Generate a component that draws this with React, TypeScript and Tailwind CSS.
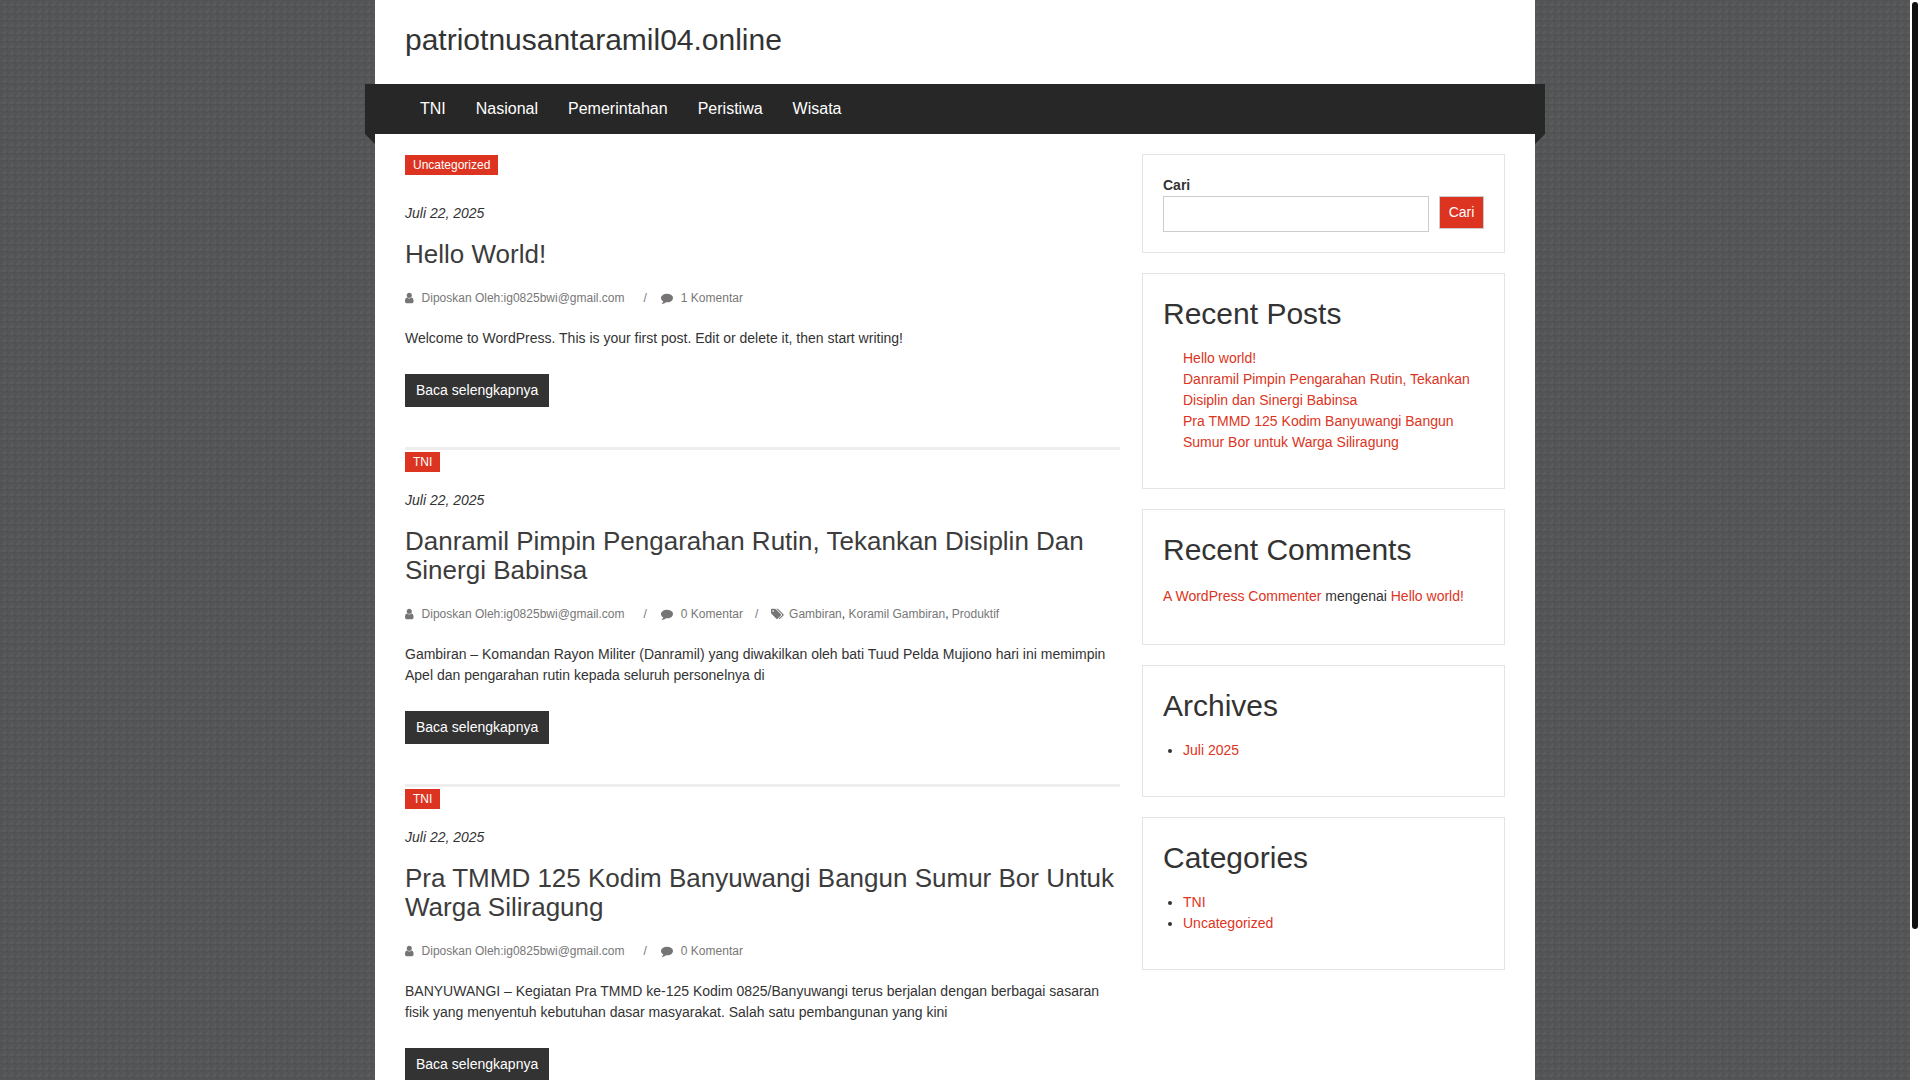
import type { ReactNode } from "react";

type Post = {
  category: string;
  title: string;
  comments: string;
  tags?: string[];
  excerpt: string;
};

const posts: Post[] = [
  {
    category: "Uncategorized",
    title: "Hello World!",
    comments: "1 Komentar",
    excerpt:
      "Welcome to WordPress. This is your first post. Edit or delete it, then start writing!",
  },
  {
    category: "TNI",
    title: "Danramil Pimpin Pengarahan Rutin, Tekankan Disiplin Dan Sinergi Babinsa",
    comments: "0 Komentar",
    tags: ["Gambiran", "Koramil Gambiran", "Produktif"],
    excerpt:
      "Gambiran – Komandan Rayon Militer (Danramil) yang diwakilkan oleh bati Tuud Pelda Mujiono hari ini memimpin Apel dan pengarahan rutin kepada seluruh personelnya di",
  },
  {
    category: "TNI",
    title: "Pra TMMD 125 Kodim Banyuwangi Bangun Sumur Bor Untuk Warga Siliragung",
    comments: "0 Komentar",
    excerpt:
      "BANYUWANGI – Kegiatan Pra TMMD ke-125 Kodim 0825/Banyuwangi terus berjalan dengan berbagai sasaran fisik yang menyentuh kebutuhan dasar masyarakat. Salah satu pembangunan yang kini",
  },
];

const USER =
  "M1280 1399q0 109-62.5 187t-150.5 78h-854q-88 0-150.5-78t-62.5-187q0-85 8.5-160.5t31.5-152 58.5-131 94-89 134.5-34.5q131 128 313 128t313-128q76 0 134.5 34.5t94 89 58.5 131 31.5 152 8.5 160.5zm-256-887q0 159-112.5 271.5t-271.5 112.5-271.5-112.5-112.5-271.5 112.5-271.5 271.5-112.5 271.5 112.5 112.5 271.5z";
const COMMENT =
  "M1792 896q0 174-120 321.5t-326 233-450 85.5q-70 0-145-8-198 175-460 242-49 14-114 22-17 2-30.5-9t-17.5-29v-1q-3-4-.5-12t2-10 4.5-9.5l6-9 7-8.5 8-9q7-8 31-34.5t34.5-38 31-39.5 32.5-51 27-59 26-76q-157-89-247.5-220t-90.5-281q0-130 71-248.5t191-204.5 286-136.5 348-50.5q244 0 450 85.5t326 233 120 321.5z";
const TAGS =
  "M448 448q0-53-37.5-90.5t-90.5-37.5-90.5 37.5-37.5 90.5 37.5 90.5 90.5 37.5 90.5-37.5 37.5-90.5zm1067 576q0 53-37 90l-491 492q-39 37-91 37-53 0-90-37l-715-716q-38-37-64.5-101t-26.5-117v-416q0-52 38-90t90-38h416q53 0 117 26.5t102 64.5l715 714q37 39 37 91zm384 0q0 53-37 90l-491 492q-39 37-91 37-36 0-59-14t-53-45l470-470q37-37 37-90 0-52-37-91l-715-714q-38-38-102-64.5t-117-26.5h224q53 0 117 26.5t102 64.5l715 714q37 39 37 91z";

function Icon({ d, width }: { d: string; width: number }) {
  return (
    <svg
      viewBox={`0 0 ${width} 1792`}
      className="mb-0.5 h-3 w-auto shrink-0 fill-[#777474]"
      aria-hidden="true"
    >
      <path d={d} />
    </svg>
  );
}

function PostCard({ post, first }: { post: Post; first: boolean }) {
  return (
    <article className={first ? "pt-px" : "border-t-[3px] border-[#eeeeee] pt-0.5"}>
      <div className={first ? "mb-7 flex" : "mb-[18px] flex"}>
        <a href="#" className="bg-[#dd3422] px-2 text-xs leading-5 text-white">
          {post.category}
        </a>
      </div>
      <p className="italic">Juli 22, 2025</p>
      <h2 className="mt-4 text-[26px] leading-[29px] text-[#3c3c3c]">
        <a href="#">{post.title}</a>
      </h2>
      <div className="mt-[19px] flex items-center text-xs leading-[21px] text-[#777777]">
        <Icon d={USER} width={1280} />
        <a href="#" className="ml-2">
          Diposkan Oleh:ig0825bwi@gmail.com
        </a>
        <span className="ml-[19px] mr-[14px]">/</span>
        <Icon d={COMMENT} width={1792} />
        <a href="#" className="ml-2">
          {post.comments}
        </a>
        {post.tags && (
          <>
            <span className="ml-3 mr-[13px]">/</span>
            <Icon d={TAGS} width={1920} />
            <span className="ml-[5px] text-[#333333]">
              {post.tags.map((tag, i) => (
                <span key={tag}>
                  {i > 0 && ", "}
                  <a href="#" className="text-[#777777]">
                    {tag}
                  </a>
                </span>
              ))}
            </span>
          </>
        )}
      </div>
      <p className="mt-[19px]">{post.excerpt}</p>
      <div className="mb-10 mt-[25px] flex">
        <a href="#" className="bg-[#333333] px-[11px] leading-[33px] text-white">
          Baca selengkapnya
        </a>
      </div>
    </article>
  );
}

function Widget({ title, children }: { title?: string; children: ReactNode }) {
  return (
    <section className="mb-5 border border-[#e4e4e4] p-5">
      {title && <h2 className="text-3xl leading-[39px]">{title}</h2>}
      {children}
    </section>
  );
}

function LinkList({ items, bullets }: { items: string[]; bullets?: boolean }) {
  return (
    <ul className={bullets ? "my-[15px] list-disc pl-5" : "my-[15px] pl-5"}>
      {items.map((item) => (
        <li key={item}>
          <a href="#" className="text-[#dd3422]">
            {item}
          </a>
        </li>
      ))}
    </ul>
  );
}

export default function App() {
  return (
    <div className="flex h-screen overflow-hidden bg-white font-['Liberation_Sans',Arial,sans-serif] text-sm leading-[21px] text-[#333333]">
      <div className="min-w-0 flex-1 overflow-hidden bg-[#57585a] bg-[linear-gradient(to_bottom,transparent_6px,rgba(0,0,0,0.1)_6px),linear-gradient(to_right,transparent_6px,rgba(0,0,0,0.06)_6px),linear-gradient(135deg,rgba(0,0,0,0.05)_40%,rgba(255,255,255,0.02)_60%)] bg-[size:7px_7px]">
        <div className="mx-auto min-h-full max-w-[1160px] bg-white">
          <header className="px-[30px] pb-[25px] pt-5">
            <h1 className="text-3xl leading-[39px]">
              <a href="#">patriotnusantaramil04.online</a>
            </h1>
          </header>
          <nav className="relative -mx-2.5 bg-[#272727] px-10">
            <ul className="flex text-base leading-[50px] text-white">
              {["TNI", "Nasional", "Pemerintahan", "Peristiwa", "Wisata"].map((item) => (
                <li key={item}>
                  <a href="#" className="block px-[15px]">
                    {item}
                  </a>
                </li>
              ))}
            </ul>
            <div className="absolute left-0 top-full size-2.5 bg-[#272727] [clip-path:polygon(0_0,100%_0,100%_100%)]" />
            <div className="absolute right-0 top-full size-2.5 bg-[#272727] [clip-path:polygon(0_0,100%_0,0_100%)]" />
          </nav>
          <div className="flex items-start justify-between px-[30px] pt-5">
            <main className="w-[65%]">
              {posts.map((post, i) => (
                <PostCard key={post.title} post={post} first={i === 0} />
              ))}
            </main>
            <aside className="w-[33%]">
              <Widget>
                <form onSubmit={(e) => e.preventDefault()}>
                  <label htmlFor="search" className="block font-bold">
                    Cari
                  </label>
                  <div className="flex items-start gap-2.5">
                    <input
                      id="search"
                      type="search"
                      className="h-9 min-w-0 flex-1 border border-[#cccccc] bg-white px-2"
                    />
                    <button
                      type="submit"
                      className="w-[45px] border border-[#cccccc] bg-[#dd3422] text-center leading-[31px] text-white"
                    >
                      Cari
                    </button>
                  </div>
                </form>
              </Widget>
              <Widget title="Recent Posts">
                <LinkList
                  items={[
                    "Hello world!",
                    "Danramil Pimpin Pengarahan Rutin, Tekankan Disiplin dan Sinergi Babinsa",
                    "Pra TMMD 125 Kodim Banyuwangi Bangun Sumur Bor untuk Warga Siliragung",
                  ]}
                />
              </Widget>
              <Widget title="Recent Comments">
                <p className="my-[17px]">
                  <a href="#" className="text-[#dd3422]">
                    A WordPress Commenter
                  </a>{" "}
                  mengenai{" "}
                  <a href="#" className="text-[#dd3422]">
                    Hello world!
                  </a>
                </p>
              </Widget>
              <Widget title="Archives">
                <LinkList bullets items={["Juli 2025"]} />
              </Widget>
              <Widget title="Categories">
                <LinkList bullets items={["TNI", "Uncategorized"]} />
              </Widget>
            </aside>
          </div>
        </div>
      </div>
      <div className="w-2.5 shrink-0 px-0.5 pt-0.5" aria-hidden="true">
        <div className="h-[86%] rounded-full bg-[#111111]" />
      </div>
    </div>
  );
}
